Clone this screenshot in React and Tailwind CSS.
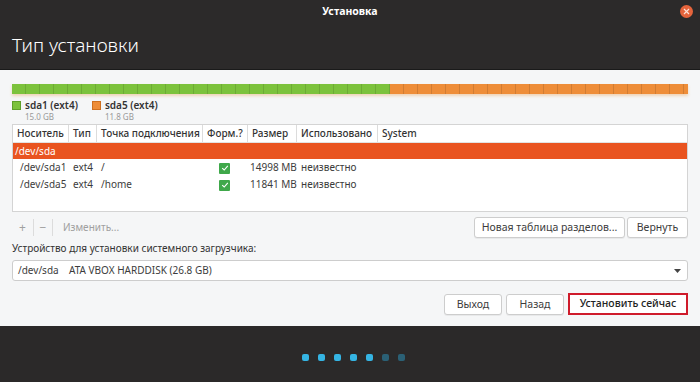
import React from 'react';

const cols = [
  { label: 'Носитель', w: 'w-[56px]' },
  { label: 'Тип', w: 'w-[28px]' },
  { label: 'Точка подключения', w: 'w-[106px]' },
  { label: 'Форм.?', w: 'w-[45px]' },
  { label: 'Размер', w: 'w-[49px]' },
  { label: 'Использовано', w: 'w-[81px]' },
];

const rows = [
  { dev: '/dev/sda1', type: 'ext4', mount: '/', size: '14998 MB' },
  { dev: '/dev/sda5', type: 'ext4', mount: '/home', size: '11841 MB' },
];

function Check() {
  return (
    <span className="inline-flex items-center justify-center w-[11px] h-[11px] bg-[#3fa84a] rounded-[1px]">
      <svg width="8" height="8" viewBox="0 0 8 8">
        <path d="M1.2 4.2 L3.2 6 L6.8 1.8" fill="none" stroke="#fff" strokeWidth="1.1" />
      </svg>
    </span>
  );
}

function Btn({ children, className = '' }) {
  return (
    <button className={`h-[21px] rounded-[3px] border border-[#cdcdcd] bg-white text-[10.5px] text-[#3c3c3c] shadow-[0_1px_0_rgba(0,0,0,0.05)] ${className}`}>
      {children}
    </button>
  );
}

export default function App() {
  return (
    <div className="w-[700px] h-[382px] flex flex-col font-['Noto_Sans',sans-serif] text-[#3c3c3c] overflow-hidden">
      <div className="h-[70px] bg-[#2c2a2a] relative border-b border-[#1a1a1a]">
        <div className="text-center text-white font-bold text-[10.5px] pt-[4px]">Установка</div>
        <div className="absolute right-[7px] top-[5px] w-[13px] h-[13px] rounded-full bg-[#e5643c] flex items-center justify-center">
          <svg width="7" height="7" viewBox="0 0 7 7">
            <path d="M1 1 L6 6 M6 1 L1 6" stroke="#fde3d8" strokeWidth="1.2" />
          </svg>
        </div>
        <div className="pl-[12px] pt-[16px] text-white text-[19px] font-light leading-none">Тип установки</div>
      </div>

      <div className="flex-1 bg-[#f5f6f7] px-[12px] pt-[14px]">
        <div className="flex h-[10px] shadow-[0_2px_3px_rgba(230,150,60,0.35)]">
          <div className="w-[378px] bg-[#7cc23c] bg-[repeating-linear-gradient(90deg,transparent_0px,transparent_13px,rgba(0,0,0,0.12)_13px,rgba(0,0,0,0.12)_14px)]" />
          <div className="flex-1 bg-[#ee8d38] bg-[repeating-linear-gradient(90deg,transparent_0px,transparent_13px,rgba(0,0,0,0.12)_13px,rgba(0,0,0,0.12)_14px)]" />
        </div>

        <div className="flex gap-[14px] mt-[5px] h-[25px]">
          <div className="flex gap-[4px]">
            <span className="w-[9px] h-[9px] mt-[2px] bg-[#7cc23c] border border-[#5fa02a]" />
            <div>
              <div className="text-[10px] leading-[13px] font-semibold text-[#333]">sda1 (ext4)</div>
              <div className="text-[8px] leading-[10px] text-[#999]">15.0 GB</div>
            </div>
          </div>
          <div className="flex gap-[4px]">
            <span className="w-[9px] h-[9px] mt-[2px] bg-[#ee8d38] border border-[#cf7020]" />
            <div>
              <div className="text-[10px] leading-[13px] font-semibold text-[#333]">sda5 (ext4)</div>
              <div className="text-[8px] leading-[10px] text-[#999]">11.8 GB</div>
            </div>
          </div>
        </div>

        <div className="h-[88px] border border-[#d4d4d4] bg-white text-[10px]">
          <div className="flex h-[18px] items-center border-b border-[#e2e2e2] font-medium text-[#333]">
            {cols.map((c) => (
              <div key={c.label} className={`${c.w} h-full flex items-center pl-[4px] border-r border-[#dcdcdc]`}>{c.label}</div>
            ))}
            <div className="pl-[4px]">System</div>
          </div>
          <div className="h-[16px] bg-[#e95420] text-white flex items-center pl-[2px]">/dev/sda</div>
          {rows.map((r) => (
            <div key={r.dev} className="flex h-[17px] items-center">
              <div className="w-[56px] pl-[7px]">{r.dev}</div>
              <div className="w-[28px] pl-[4px]">{r.type}</div>
              <div className="w-[106px] pl-[4px]">{r.mount}</div>
              <div className="w-[45px] flex justify-center pt-[1px] pr-[2px]"><Check /></div>
              <div className="w-[49px] pl-[2px]">{r.size}</div>
              <div className="w-[81px] pl-[4px]">неизвестно</div>
            </div>
          ))}
        </div>

        <div className="flex items-center justify-between mt-[5px] h-[21px]">
          <div className="flex items-center text-[12px] text-[#a0a0a0] h-full">
            <span className="w-[21px] text-center">+</span>
            <span className="w-px h-[17px] bg-[#dcdcdc]" />
            <span className="w-[18px] text-center">−</span>
            <span className="w-px h-[17px] bg-[#dcdcdc]" />
            <span className="pl-[10px] text-[10px]">Изменить...</span>
          </div>
          <div className="flex gap-[2px]">
            <Btn className="w-[151px]">Новая таблица разделов...</Btn>
            <Btn className="w-[61px]">Вернуть</Btn>
          </div>
        </div>

        <div className="text-[10px] text-[#333] mt-[3px] h-[15px] leading-[15px]">Устройство для установки системного загрузчика:</div>

        <div className="mt-[4px] h-[21px] rounded-[3px] border border-[#cdcdcd] bg-white flex items-center justify-between pl-[5px] pr-[6px] text-[10px]">
          <span className="whitespace-pre">/dev/sda    ATA VBOX HARDDISK (26.8 GB)</span>
          <svg width="7" height="4" viewBox="0 0 7 4"><path d="M0 0 L7 0 L3.5 4 Z" fill="#444" /></svg>
        </div>

        <div className="flex justify-end gap-[4px] mt-[13px]">
          <Btn className="w-[58px]">Выход</Btn>
          <Btn className="w-[58px]">Назад</Btn>
          <button className="h-[22px] w-[120px] -mt-[1px] border-2 border-[#cf1b2b] bg-white text-[10.5px] font-medium text-[#222]">Установить сейчас</button>
        </div>
      </div>

      <div className="h-[56px] bg-[#2b2929] flex items-center justify-center gap-[9px] pl-[6px] pt-[6px]">
        {[0, 1, 2, 3, 4].map((i) => (
          <span key={i} className="w-[7px] h-[7px] rounded-[2px] bg-[#35b4e3]" />
        ))}
        {[0, 1].map((i) => (
          <span key={'d' + i} className="w-[7px] h-[7px] rounded-[2px] bg-[#2b6075]" />
        ))}
      </div>
    </div>
  );
}
